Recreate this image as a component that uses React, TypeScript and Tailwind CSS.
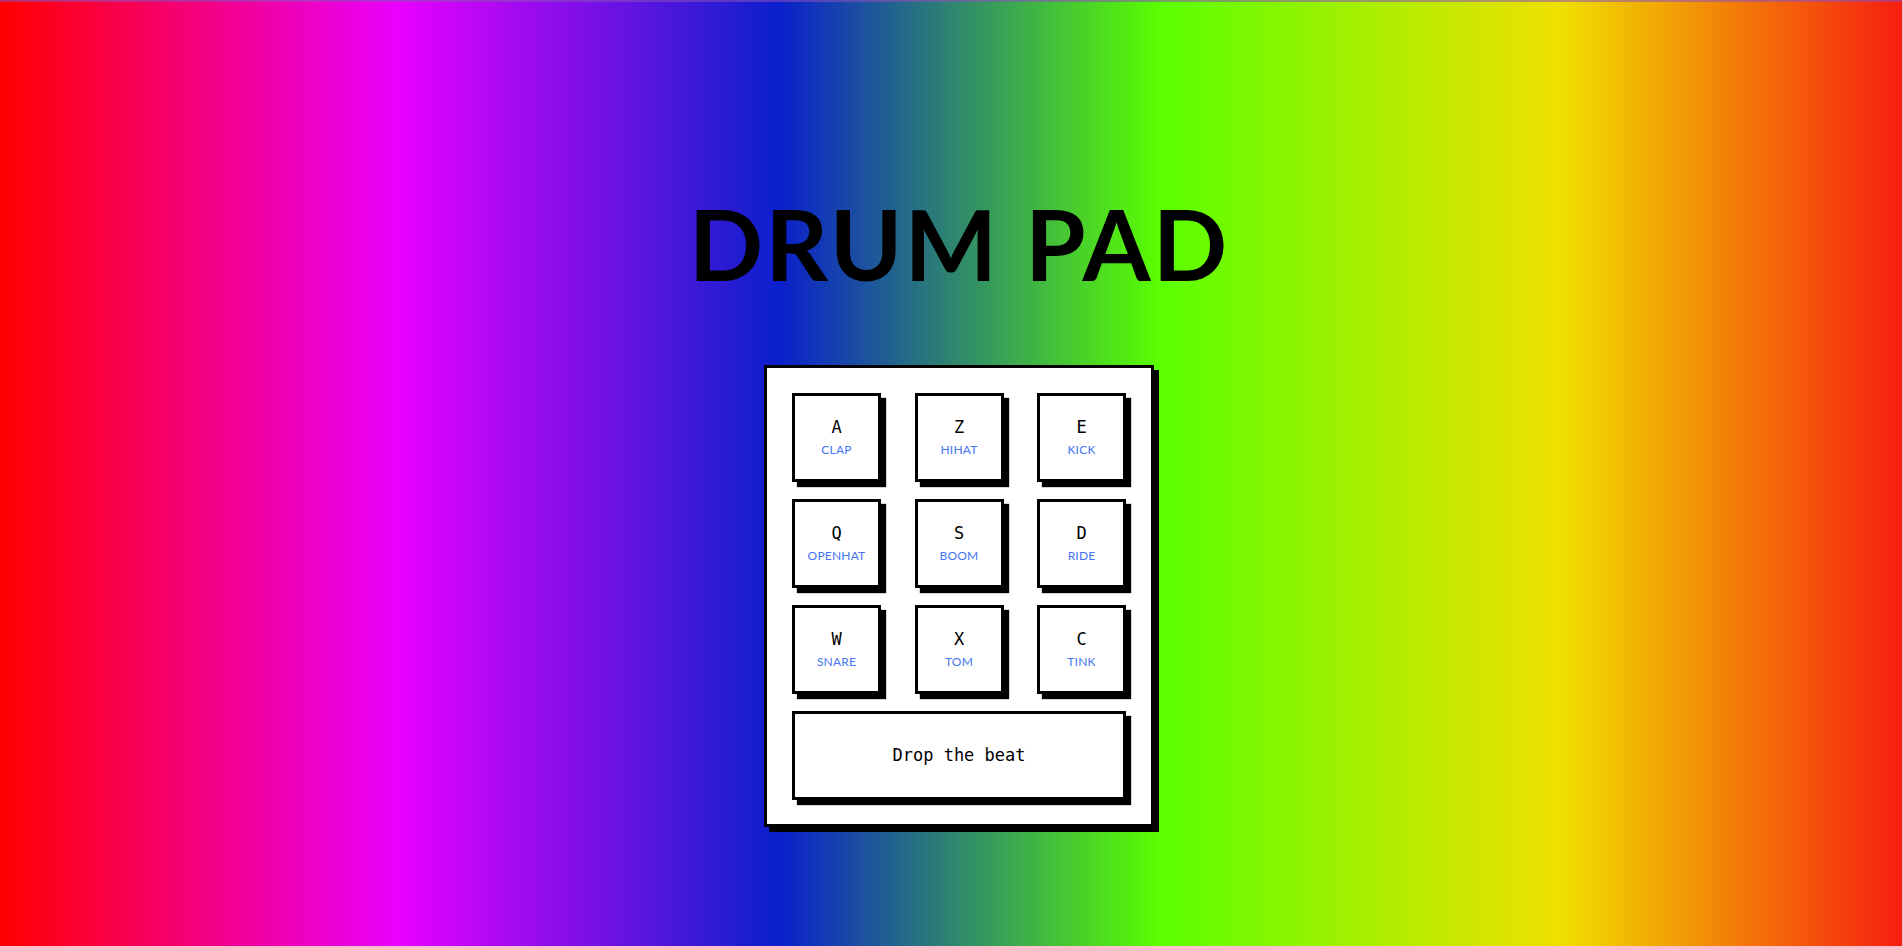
const pads = [
  { key: "A", sound: "CLAP" },
  { key: "Z", sound: "HIHAT" },
  { key: "E", sound: "KICK" },
  { key: "Q", sound: "OPENHAT" },
  { key: "S", sound: "BOOM" },
  { key: "D", sound: "RIDE" },
  { key: "W", sound: "SNARE" },
  { key: "X", sound: "TOM" },
  { key: "C", sound: "TINK" },
];

function Pad({ letter, sound }: { letter: string; sound: string }) {
  return (
    <button className="w-[89px] h-[89px] bg-white border-[3px] border-black shadow-[5px_5px_1px_#000] flex flex-col items-center justify-center gap-[8px] cursor-pointer">
      <span className="font-['DejaVu_Sans_Mono',monospace] text-[17px] leading-none text-black">{letter}</span>
      <span className="font-['Lato',sans-serif] text-[12px] leading-none tracking-[0.2px] text-[#4575f2]">{sound}</span>
    </button>
  );
}

export default function App() {
  return (
    <div className="min-h-screen w-full border-t-2 border-[rgba(140,80,190,0.55)] bg-[linear-gradient(to_right,#ff0000_0%,#e900ff_21%,#0a20cc_41%,#5aff00_61%,#f0e000_82%,#f61e10_100%)] flex flex-col items-center pt-[192px] pl-4">
      <h1 className="font-['Lato',sans-serif] font-bold text-[98px] leading-none tracking-[2px] text-black">
        DRUM PAD
      </h1>

      <div className="mt-[73px] w-[390px] bg-white border-[3px] border-black shadow-[5px_5px_0_#000] px-[25px] pt-[25px] pb-[24px]">
        <div className="grid grid-cols-[89px_89px_89px] justify-between gap-y-[17px]">
          {pads.map((p) => (
            <Pad key={p.key} letter={p.key} sound={p.sound} />
          ))}
        </div>
        <div className="mt-[17px] h-[89px] w-full bg-white border-[3px] border-black shadow-[5px_5px_1px_#000] flex items-center justify-center">
          <span className="font-['DejaVu_Sans_Mono',monospace] text-[17px] text-black">Drop the beat</span>
        </div>
      </div>
    </div>
  );
}
